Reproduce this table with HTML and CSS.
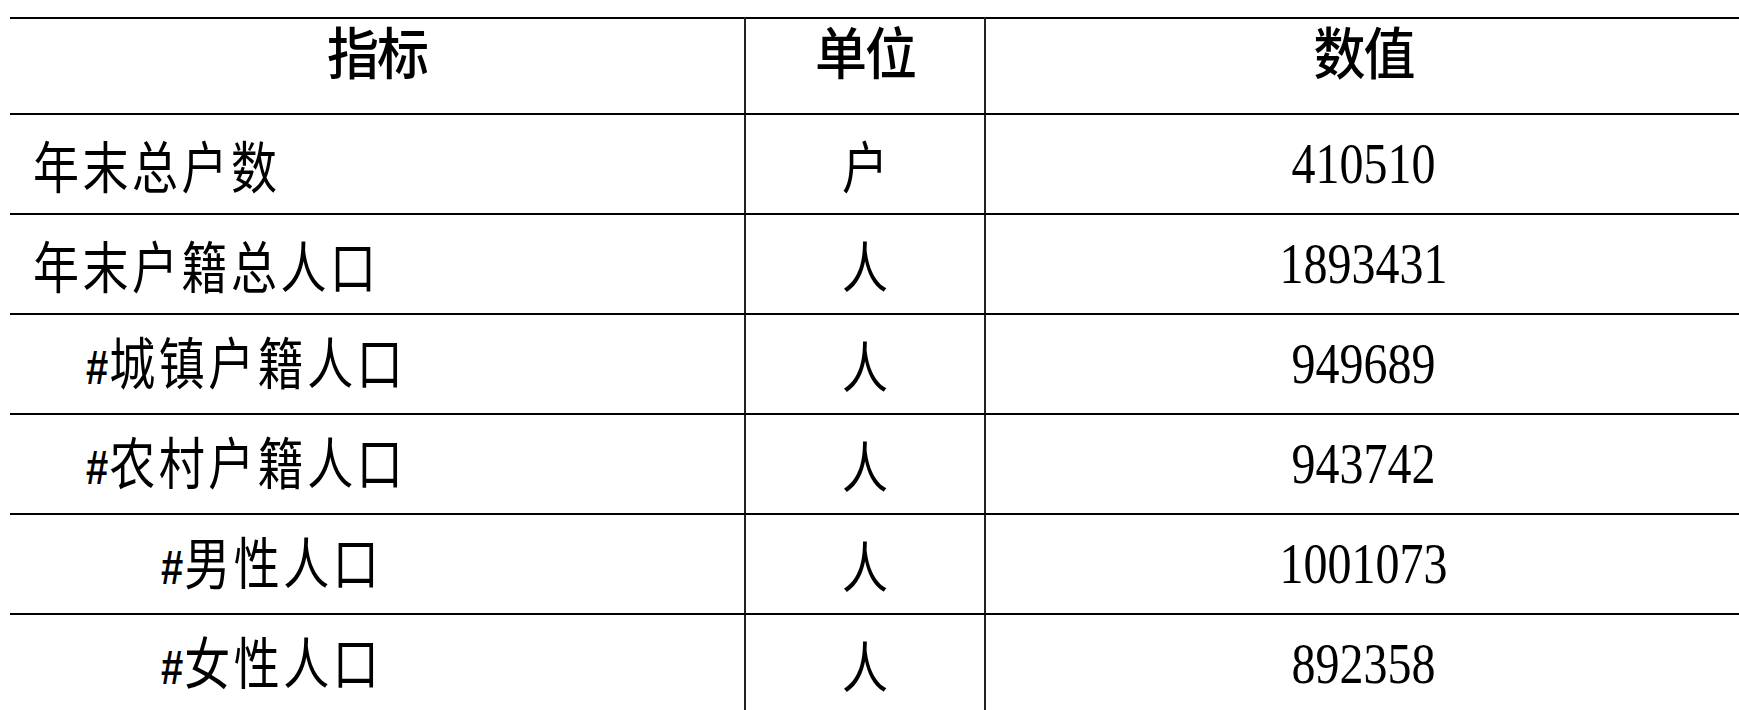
FILE: index.html
```html
<!DOCTYPE html>
<html lang="zh">
<head>
<meta charset="utf-8">
<title>指标</title>
<link rel="stylesheet" href="styles.css">
</head>
<body>
<table class="stats">
  <colgroup>
    <col class="c-name">
    <col class="c-unit">
    <col class="c-val">
  </colgroup>
  <thead>
    <tr class="head">
      <th><span class="t">指标</span></th>
      <th><span class="t">单位</span></th>
      <th><span class="t">数值</span></th>
    </tr>
  </thead>
  <tbody>
    <tr>
      <td class="name"><span class="t">年末总户数</span></td>
      <td class="unit"><span class="t">户</span></td>
      <td class="val"><span class="t">410510</span></td>
    </tr>
    <tr>
      <td class="name"><span class="t">年末户籍总人口</span></td>
      <td class="unit"><span class="t">人</span></td>
      <td class="val"><span class="t">1893431</span></td>
    </tr>
    <tr>
      <td class="name ind1"><span class="t"><span class="hash">#</span>城镇户籍人口</span></td>
      <td class="unit"><span class="t">人</span></td>
      <td class="val"><span class="t">949689</span></td>
    </tr>
    <tr>
      <td class="name ind1"><span class="t"><span class="hash">#</span>农村户籍人口</span></td>
      <td class="unit"><span class="t">人</span></td>
      <td class="val"><span class="t">943742</span></td>
    </tr>
    <tr>
      <td class="name ind2"><span class="t"><span class="hash">#</span>男性人口</span></td>
      <td class="unit"><span class="t">人</span></td>
      <td class="val"><span class="t">1001073</span></td>
    </tr>
    <tr>
      <td class="name ind2"><span class="t"><span class="hash">#</span>女性人口</span></td>
      <td class="unit"><span class="t">人</span></td>
      <td class="val"><span class="t">892358</span></td>
    </tr>
  </tbody>
</table>
</body>
</html>
```

FILE: styles.css
```css
html, body {
  margin: 0;
  padding: 0;
  background: #fff;
  overflow: hidden;
}

body {
  padding: 17px 0 0 10px;
  font-family: "Noto Sans CJK SC", "Noto Sans", sans-serif;
  color: #000;
}

.stats {
  border-collapse: collapse;
  table-layout: fixed;
  width: 1731px;
}

.c-name { width: 735px; }
.c-unit { width: 240px; }
.c-val  { width: 756px; }

.stats th,
.stats td {
  padding: 0;
  border-top: 2px solid #000;
  border-bottom: 2px solid #000;
  border-left: 2px solid #222;
  border-right: 2px solid #222;
}

.stats tr > :first-child { border-left: none; }
.stats tr > :last-child { border-right: none; }

.t {
  display: inline-block;
  transform: scaleY(1.2);
  transform-origin: 50% 50%;
}

.head th {
  height: 94px;
  vertical-align: top;
  padding-top: 0;
  font-size: 52px;
  line-height: 62px;
  font-weight: 500;
  text-align: center;
  letter-spacing: -2px;
}

.head .t { transform: scaleY(1.08); }

.stats tbody td {
  height: 98px;
  vertical-align: middle;
}

.name {
  font-size: 46px;
  line-height: 56px;
  letter-spacing: 3.5px;
  padding-left: 23px !important;
  text-align: left;
  white-space: nowrap;
}

.name.ind1 { padding-left: 76px !important; }
.name.ind2 { padding-left: 151px !important; }

.hash {
  font-family: "Liberation Sans", sans-serif;
  font-weight: 700;
  font-size: 40px;
  letter-spacing: 0;
  margin-right: 1px;
}

.unit {
  font-size: 46px;
  line-height: 56px;
  text-align: center;
}

.val {
  font-family: "Liberation Serif", serif;
  font-size: 48px;
  line-height: 56px;
  text-align: center;
}
```
